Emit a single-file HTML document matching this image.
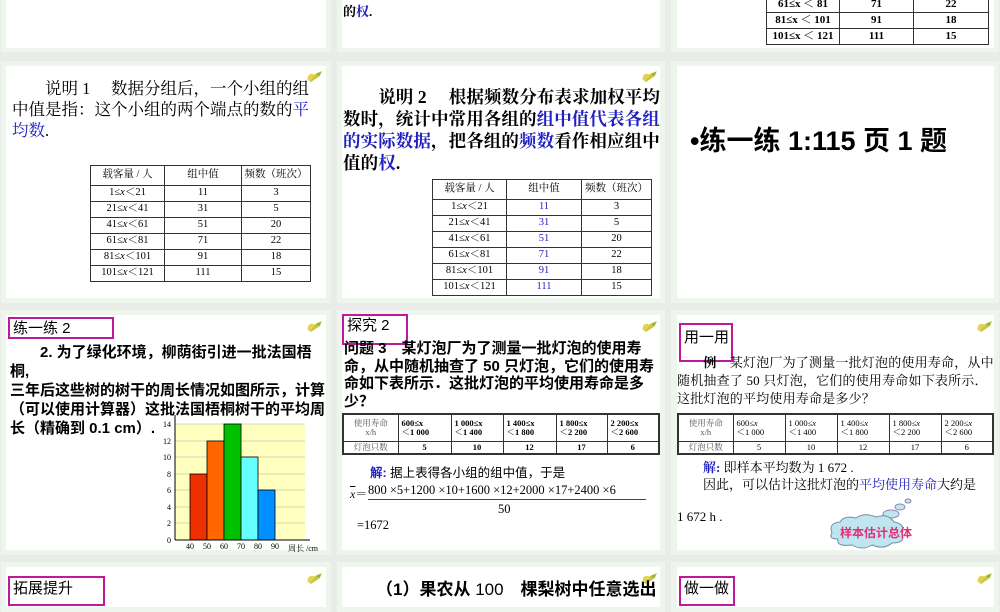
<!DOCTYPE html>
<html><head><meta charset="utf-8"><style>
*{margin:0;padding:0;box-sizing:border-box}
body{width:1000px;height:600px;background:#e9ece8;position:relative;overflow:hidden;font-family:"Liberation Serif","Noto Serif CJK SC",serif;color:#000}
.s{position:absolute;background:#eef5ec}
.w{position:absolute;background:#fff}
.a{position:absolute;white-space:nowrap}
.sans{font-family:"Liberation Sans","Noto Sans CJK SC",sans-serif}
.b{color:#2020c0}
table{position:absolute;border-collapse:collapse;font-family:"Liberation Serif","Noto Serif CJK SC",serif}
td{border:1px solid #333;text-align:center;padding:0;line-height:1}
.lab{position:absolute;border:2px solid #c0189a;font-family:"Liberation Sans","Noto Sans CJK SC",sans-serif;font-size:15px;padding-left:3px}
.ic{position:absolute;width:18px;height:14px}
</style></head><body>

<div class="s" style="left:1px;top:-10px;width:330px;height:62px"></div><div class="w" style="left:6px;top:-10px;width:320px;height:58px"></div>
<div class="s" style="left:337px;top:-10px;width:328px;height:62px"></div><div class="w" style="left:342px;top:-10px;width:318px;height:58px"></div>
<div class="s" style="left:671px;top:-10px;width:328px;height:62px"></div><div class="w" style="left:677px;top:-10px;width:317px;height:58px"></div>

<div class="s" style="left:1px;top:61px;width:330px;height:242px"></div><div class="w" style="left:6px;top:66px;width:320px;height:232px"></div>
<div class="s" style="left:337px;top:61px;width:328px;height:242px"></div><div class="w" style="left:342px;top:66px;width:318px;height:232px"></div>
<div class="s" style="left:671px;top:61px;width:328px;height:242px"></div><div class="w" style="left:677px;top:66px;width:317px;height:232px"></div>

<div class="s" style="left:1px;top:310px;width:330px;height:245px"></div><div class="w" style="left:6px;top:315px;width:320px;height:235px"></div>
<div class="s" style="left:337px;top:310px;width:328px;height:245px"></div><div class="w" style="left:342px;top:315px;width:318px;height:235px"></div>
<div class="s" style="left:671px;top:310px;width:328px;height:245px"></div><div class="w" style="left:677px;top:315px;width:317px;height:235px"></div>

<div class="s" style="left:1px;top:562px;width:330px;height:50px"></div><div class="w" style="left:6px;top:567px;width:320px;height:40px"></div>
<div class="s" style="left:337px;top:562px;width:328px;height:50px"></div><div class="w" style="left:342px;top:567px;width:318px;height:40px"></div>
<div class="s" style="left:671px;top:562px;width:328px;height:50px"></div><div class="w" style="left:677px;top:567px;width:317px;height:40px"></div>

<svg width="0" height="0" style="position:absolute"><defs><g id="pen"><path d="M2 9 L12 3 L17 1 L15 6 L6 12 Z" fill="#c8c840"/><path d="M3 6 Q6 2 10 5 L5 11 Q2 10 3 6Z" fill="#e8d050"/><path d="M11 4 L16 2 L14 6Z" fill="#90b040"/></g></defs></svg>
<svg class="ic" style="left:305px;top:70px" viewBox="0 0 18 14"><use href="#pen"/></svg>
<svg class="ic" style="left:640px;top:70px" viewBox="0 0 18 14"><use href="#pen"/></svg>
<svg class="ic" style="left:305px;top:320px" viewBox="0 0 18 14"><use href="#pen"/></svg>
<svg class="ic" style="left:640px;top:320px" viewBox="0 0 18 14"><use href="#pen"/></svg>
<svg class="ic" style="left:975px;top:320px" viewBox="0 0 18 14"><use href="#pen"/></svg>
<svg class="ic" style="left:305px;top:572px" viewBox="0 0 18 14"><use href="#pen"/></svg>
<svg class="ic" style="left:640px;top:572px" viewBox="0 0 18 14"><use href="#pen"/></svg>
<svg class="ic" style="left:975px;top:572px" viewBox="0 0 18 14"><use href="#pen"/></svg>

<!-- row0 -->
<div class="a" style="left:343px;top:1px;font-size:13px;font-weight:bold">的<span class="b">权</span>.</div>
<table style="left:766px;top:-4px;width:223px;font-size:11px;font-weight:bold">
<tr style="height:16px"><td style="width:73px">61≤x ＜ 81</td><td style="width:74px">71</td><td>22</td></tr>
<tr style="height:16px"><td>81≤x ＜ 101</td><td>91</td><td>18</td></tr>
<tr style="height:16px"><td>101≤x ＜ 121</td><td>111</td><td>15</td></tr>
</table>

<!-- row1 col1 -->
<div class="a" style="left:12px;top:78px;font-size:16.5px;line-height:21px;white-space:normal;width:306px">　　说明 1　 数据分组后，一个小组的组中值是指：这个小组的两个端点的数的<span class="b">平均数</span>.</div>
<table style="left:90px;top:165px;width:221px;font-size:10.5px">
<tr style="height:20px"><td style="width:74px">载客量 / 人</td><td style="width:77px">组中值</td><td>频数（班次）</td></tr>
<tr style="height:16px"><td>1≤<i>x</i>＜21</td><td>11</td><td>3</td></tr>
<tr style="height:16px"><td>21≤<i>x</i>＜41</td><td>31</td><td>5</td></tr>
<tr style="height:16px"><td>41≤<i>x</i>＜61</td><td>51</td><td>20</td></tr>
<tr style="height:16px"><td>61≤<i>x</i>＜81</td><td>71</td><td>22</td></tr>
<tr style="height:16px"><td>81≤<i>x</i>＜101</td><td>91</td><td>18</td></tr>
<tr style="height:16px"><td>101≤<i>x</i>＜121</td><td>111</td><td>15</td></tr>
</table>

<!-- row1 col2 -->
<div class="a" style="left:343px;top:86px;font-size:17.5px;line-height:22px;white-space:normal;width:322px;font-weight:bold;letter-spacing:0.1px">　　说明 2　 根据频数分布表求加权平均数时，统计中常用各组的<span class="b">组中值代表各组的实际数据</span>，把各组的<span class="b">频数</span>看作相应组中值的<span class="b">权</span>.</div>
<table style="left:432px;top:179px;width:220px;font-size:10.5px">
<tr style="height:20px"><td style="width:74px">载客量 / 人</td><td style="width:75px">组中值</td><td>频数（班次）</td></tr>
<tr style="height:16px"><td>1≤<i>x</i>＜21</td><td class="b">11</td><td>3</td></tr>
<tr style="height:16px"><td>21≤<i>x</i>＜41</td><td class="b">31</td><td>5</td></tr>
<tr style="height:16px"><td>41≤<i>x</i>＜61</td><td class="b">51</td><td>20</td></tr>
<tr style="height:16px"><td>61≤<i>x</i>＜81</td><td class="b">71</td><td>22</td></tr>
<tr style="height:16px"><td>81≤<i>x</i>＜101</td><td class="b">91</td><td>18</td></tr>
<tr style="height:16px"><td>101≤<i>x</i>＜121</td><td class="b">111</td><td>15</td></tr>
</table>

<!-- row1 col3 -->
<div class="a sans" style="left:690px;top:119px;font-size:27px;font-weight:bold">•练一练 1:115 页 1 题</div>

<!-- row2 col1 -->
<div class="lab" style="left:8px;top:317px;width:106px;height:22px;line-height:19px">练一练 2</div>
<div class="a sans" style="left:10px;top:343px;font-size:15px;line-height:19px;font-weight:bold;white-space:normal;width:316px">　　2. 为了绿化环境，柳荫街引进一批法国梧桐,<br>三年后这些树的树干的周长情况如图所示，计算（可以使用计算器）这批法国梧桐树干的平均周长（精确到 0.1 cm）.</div>
<svg style="position:absolute;left:155px;top:405px" width="175" height="150" viewBox="0 0 175 150">
<rect x="20" y="19" width="130" height="116" fill="#ffffc0"/>
<g stroke="#aaa" stroke-width="0.6"><line x1="20" y1="19" x2="150" y2="19"/><line x1="20" y1="36" x2="150" y2="36"/><line x1="20" y1="52" x2="150" y2="52"/><line x1="20" y1="69" x2="150" y2="69"/><line x1="20" y1="85" x2="150" y2="85"/><line x1="20" y1="102" x2="150" y2="102"/><line x1="20" y1="118" x2="150" y2="118"/></g>
<g stroke="#000" stroke-width="0.8">
<rect x="35" y="69" width="17" height="66" fill="#ee3000"/>
<rect x="52" y="36" width="17" height="99" fill="#ff6600"/>
<rect x="69" y="19" width="17" height="116" fill="#00c000"/>
<rect x="86" y="52" width="17" height="83" fill="#66ffff"/>
<rect x="103" y="85" width="17" height="50" fill="#0090ff"/>
</g>
<line x1="20" y1="10" x2="20" y2="135" stroke="#000"/><line x1="20" y1="135" x2="155" y2="135" stroke="#000"/>
<g font-size="8" font-family="Liberation Serif" text-anchor="end"><text x="16" y="22">14</text><text x="16" y="39">12</text><text x="16" y="55">10</text><text x="16" y="72">8</text><text x="16" y="88">6</text><text x="16" y="105">4</text><text x="16" y="121">2</text><text x="16" y="138">0</text></g>
<g font-size="8" font-family="Liberation Serif" text-anchor="middle"><text x="35" y="144">40</text><text x="52" y="144">50</text><text x="69" y="144">60</text><text x="86" y="144">70</text><text x="103" y="144">80</text><text x="120" y="144">90</text></g>
<text x="133" y="146" font-size="8" font-family="Liberation Serif,Noto Serif CJK SC">周长 /cm</text>
</svg>

<!-- row2 col2 -->
<div class="lab" style="left:342px;top:314px;width:66px;height:31px;line-height:20px">探究 2</div>
<div class="a sans" style="left:344px;top:340px;font-size:15px;line-height:17.5px;font-weight:bold;white-space:normal;width:314px">问题 3　某灯泡厂为了测量一批灯泡的使用寿命，从中随机抽查了 50 只灯泡，它们的使用寿命如下表所示．这批灯泡的平均使用寿命是多少？</div>
<table style="left:342px;top:413px;width:318px;font-size:8.5px;border:2px solid #333">
<tr style="height:27px"><td style="width:55px;color:#555">使用寿命<br>x/h</td><td style="width:53px;text-align:left;padding-left:3px;font-weight:bold">600≤x<br>＜1 000</td><td style="width:52px;text-align:left;padding-left:3px;font-weight:bold">1 000≤x<br>＜1 400</td><td style="width:53px;text-align:left;padding-left:3px;font-weight:bold">1 400≤x<br>＜1 800</td><td style="width:51px;text-align:left;padding-left:3px;font-weight:bold">1 800≤x<br>＜2 200</td><td style="text-align:left;padding-left:3px;font-weight:bold">2 200≤x<br>＜2 600</td></tr>
<tr style="height:13px"><td style="color:#555">灯泡只数</td><td style="font-weight:bold">5</td><td style="font-weight:bold">10</td><td style="font-weight:bold">12</td><td style="font-weight:bold">17</td><td style="font-weight:bold">6</td></tr>
</table>
<div class="a sans" style="left:370px;top:462px;font-size:12.5px"><b class="b">解:</b> 据上表得各小组的组中值，于是</div>
<div class="a" style="left:350px;top:485px;font-size:12px"><span style="text-decoration:overline;font-style:italic">x</span>＝</div>
<div class="a" style="left:368px;top:483px;font-size:12.5px">800 ×5+1200 ×10+1600 ×12+2000 ×17+2400 ×6</div>
<div style="position:absolute;left:368px;top:499px;width:278px;height:1px;background:#444"></div>
<div class="a" style="left:498px;top:502px;font-size:12.5px">50</div>
<div class="a" style="left:357px;top:518px;font-size:12.5px">=1672</div>

<!-- row2 col3 -->
<div class="lab" style="left:679px;top:323px;width:54px;height:39px;line-height:26px">用一用</div>
<div class="a" style="left:677px;top:354px;font-size:13px;line-height:18px;white-space:normal;width:317px;letter-spacing:0.2px">　　<b>例</b>　某灯泡厂为了测量一批灯泡的使用寿命，从中随机抽查了 50 只灯泡，它们的使用寿命如下表所示．这批灯泡的平均使用寿命是多少？</div>
<table style="left:677px;top:413px;width:317px;font-size:8.5px;border:2px solid #333">
<tr style="height:27px"><td style="width:55px;color:#555">使用寿命<br>x/h</td><td style="width:52px;text-align:left;padding-left:3px">600≤<i>x</i><br>＜1 000</td><td style="width:52px;text-align:left;padding-left:3px">1 000≤<i>x</i><br>＜1 400</td><td style="width:52px;text-align:left;padding-left:3px">1 400≤<i>x</i><br>＜1 800</td><td style="width:52px;text-align:left;padding-left:3px">1 800≤<i>x</i><br>＜2 200</td><td style="text-align:left;padding-left:3px">2 200≤<i>x</i><br>＜2 600</td></tr>
<tr style="height:13px"><td style="color:#555">灯泡只数</td><td>5</td><td>10</td><td>12</td><td>17</td><td>6</td></tr>
</table>
<div class="a" style="left:703px;top:457px;font-size:13px"><b class="b">解:</b> 即样本平均数为 1 672 .</div>
<div class="a" style="left:703px;top:474px;font-size:13px">因此，可以估计这批灯泡的<span class="b">平均使用寿命</span>大约是</div>
<div class="a" style="left:677px;top:509px;font-size:13px">1 672 h .</div>
<svg style="position:absolute;left:826px;top:497px" width="90" height="55" viewBox="0 0 90 55">
<ellipse cx="82" cy="4" rx="3" ry="2" fill="#bfe6f0" stroke="#88a"/>
<ellipse cx="74" cy="10" rx="5" ry="3" fill="#bfe6f0" stroke="#88a"/>
<ellipse cx="65" cy="17" rx="8" ry="4" fill="#bfe6f0" stroke="#88a"/>
<path d="M6 36 Q2 26 14 25 Q18 18 30 21 Q38 15 50 20 Q62 16 68 25 Q80 27 76 37 Q80 46 66 46 Q58 53 46 48 Q36 54 26 48 Q10 50 12 42 Q2 42 6 36Z" fill="#bfe6f0" stroke="#7090a0"/>
</svg>
<div class="a sans" style="left:840px;top:524px;font-size:12px;font-weight:bold;color:#e0307a">样本估计总体</div>

<!-- row3 -->
<div class="lab" style="left:8px;top:576px;width:97px;height:30px;line-height:22px">拓展提升</div>
<div class="a sans" style="left:376px;top:575px;font-size:17px;font-weight:bold">（1）果农从 <span style="font-weight:normal">100</span>　棵梨树中任意选出</div>
<div class="lab" style="left:679px;top:576px;width:56px;height:30px;line-height:22px">做一做</div>
</body></html>
